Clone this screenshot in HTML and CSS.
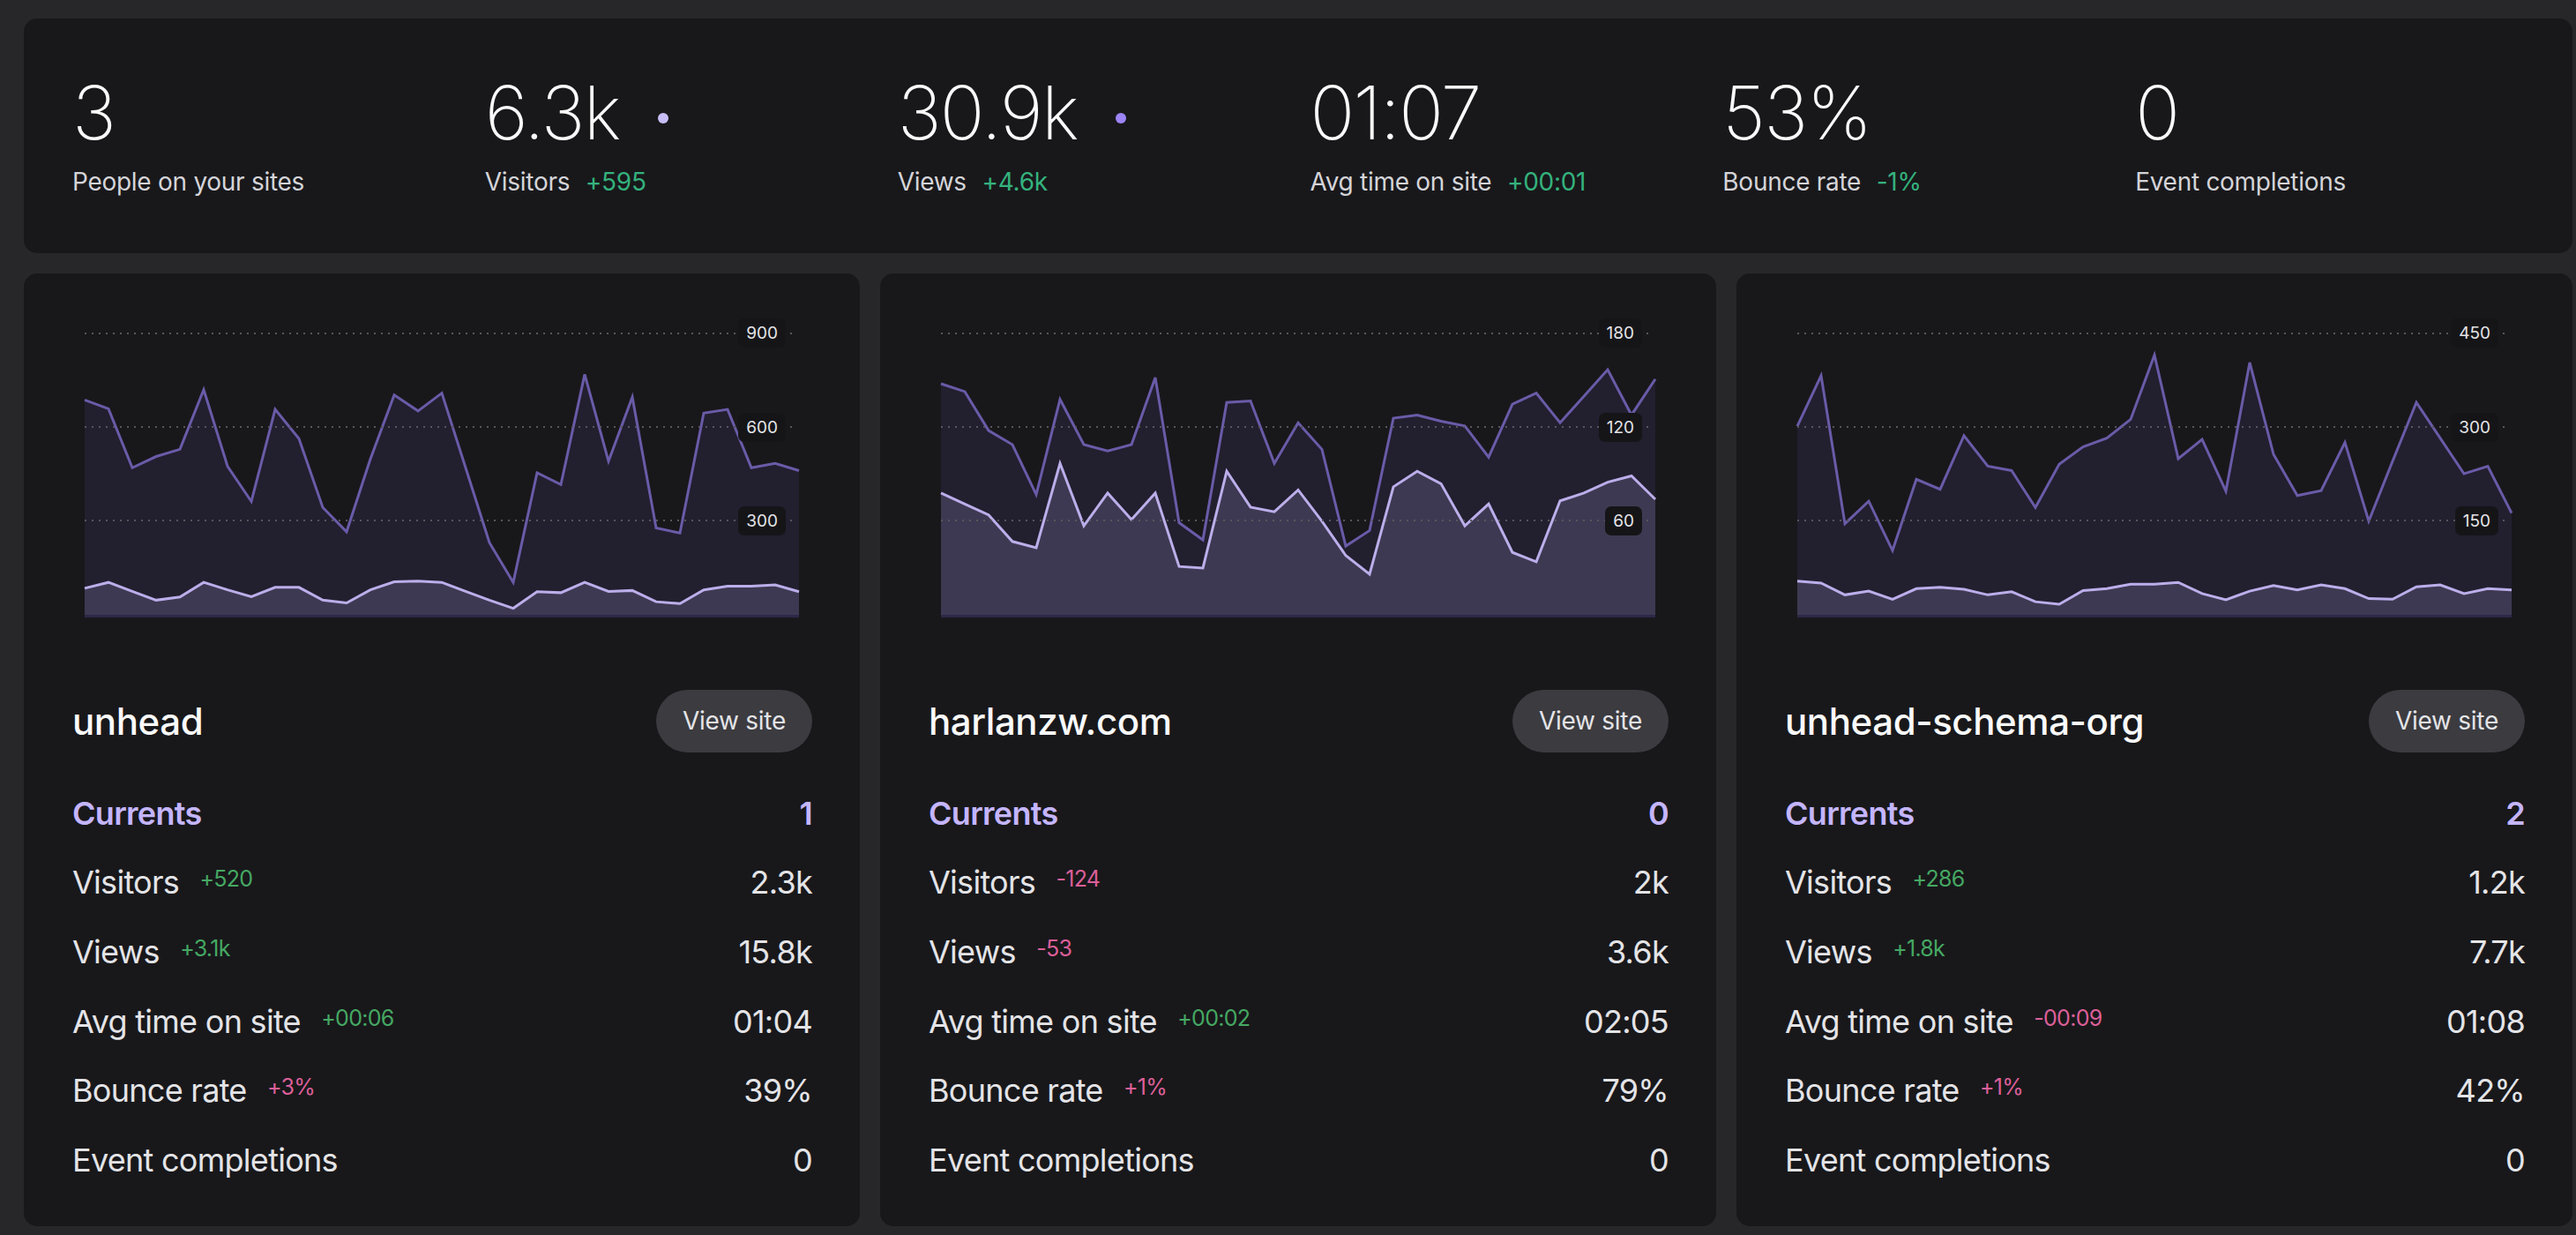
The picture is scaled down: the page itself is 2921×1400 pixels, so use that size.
FILE: index.html
```html
<!DOCTYPE html>
<html lang="en">
<head>
<meta charset="utf-8">
<title>Sites overview</title>
<link rel="stylesheet" href="styles.css">
</head>
<body>
<main class="page">
  <section class="summary">
    <div class="sum-item">
      <div class="big">3</div>
      <div class="sum-label">People on your sites</div>
    </div>
    <div class="sum-item">
      <div class="big">6.3k<span class="dot dot-visitors"></span></div>
      <div class="sum-label">Visitors <span class="up">+595</span></div>
    </div>
    <div class="sum-item">
      <div class="big">30.9k<span class="dot dot-views"></span></div>
      <div class="sum-label">Views <span class="up">+4.6k</span></div>
    </div>
    <div class="sum-item">
      <div class="big">01:07</div>
      <div class="sum-label">Avg time on site <span class="up">+00:01</span></div>
    </div>
    <div class="sum-item">
      <div class="big">53%</div>
      <div class="sum-label">Bounce rate <span class="up">-1%</span></div>
    </div>
    <div class="sum-item">
      <div class="big">0</div>
      <div class="sum-label">Event completions</div>
    </div>
  </section>

  <section class="cards">
    <!-- Card 1 -->
    <article class="card">
      <div class="chart">
        <svg class="plot" viewBox="0 0 30 1000" preserveAspectRatio="none">
          <polygon class="area-views" points="0,312 1,340 2,529 3,493 4,470 5,279 6,524 7,637 8,342 9,436 10,656 11,734 12,501 13,296 14,347 15,290 16,529 17,769 18,896 19,545 20,583 21,230 22,508 23,303 24,722 25,738 26,354 27,342 28,529 29,515 30,538 30,1000 0,1000"/>
          <polyline class="line-views" points="0,312 1,340 2,529 3,493 4,470 5,279 6,524 7,637 8,342 9,436 10,656 11,734 12,501 13,296 14,347 15,290 16,529 17,769 18,896 19,545 20,583 21,230 22,508 23,303 24,722 25,738 26,354 27,342 28,529 29,515 30,538"/>
          <polygon class="area-visitors" points="0,915 1,896 2,925 3,953 4,943 5,896 6,920 7,942 8,912 9,912 10,953 11,962 12,920 13,894 14,892 15,896 16,925 17,953 18,979 19,926 20,929 21,896 22,925 23,922 24,958 25,964 26,920 27,908 28,908 29,904 30,926 30,1000 0,1000"/>
          <polyline class="line-visitors" points="0,915 1,896 2,925 3,953 4,943 5,896 6,920 7,942 8,912 9,912 10,953 11,962 12,920 13,894 14,892 15,896 16,925 17,953 18,979 19,926 20,929 21,896 22,925 23,922 24,958 25,964 26,920 27,908 28,908 29,904 30,926"/>
        </svg>
        <div class="grid g-top"><span class="tick">900</span></div>
        <div class="grid g-mid"><span class="tick">600</span></div>
        <div class="grid g-low"><span class="tick">300</span></div>
      </div>
      <header class="card-head">
        <h2 class="site">unhead</h2>
        <a class="btn" href="#">View site</a>
      </header>
      <ul class="stats">
        <li class="row current"><span class="name">Currents</span><span class="val">1</span></li>
        <li class="row"><span class="name">Visitors <span class="delta pos">+520</span></span><span class="val">2.3k</span></li>
        <li class="row"><span class="name">Views <span class="delta pos">+3.1k</span></span><span class="val">15.8k</span></li>
        <li class="row"><span class="name">Avg time on site <span class="delta pos">+00:06</span></span><span class="val">01:04</span></li>
        <li class="row"><span class="name">Bounce rate <span class="delta neg">+3%</span></span><span class="val">39%</span></li>
        <li class="row"><span class="name">Event completions</span><span class="val">0</span></li>
      </ul>
    </article>

    <!-- Card 2 -->
    <article class="card">
      <div class="chart">
        <svg class="plot" viewBox="0 0 30 200" preserveAspectRatio="none">
          <polygon class="area-views" points="0,52 1,57 2,82 3,91 4,123 5,62 6,91 7,95 8,91 9,48 10,141 11,152 12,64 13,63 14,103 15,77 16,94 17,156 18,146 19,74 20,72 21,76 22,79 23,99 24,65 25,58 26,77 27,60 28,43 29,72 30,49 30,200 0,200"/>
          <polyline class="line-views" points="0,52 1,57 2,82 3,91 4,123 5,62 6,91 7,95 8,91 9,48 10,141 11,152 12,64 13,63 14,103 15,77 16,94 17,156 18,146 19,74 20,72 21,76 22,79 23,99 24,65 25,58 26,77 27,60 28,43 29,72 30,49"/>
          <polygon class="area-visitors" points="0,122 1,129 2,136 3,153 4,157 5,103 6,143 7,122 8,139 9,122 10,169 11,170 12,108 13,131 14,134 15,120 16,140 17,162 18,174 19,118 20,108 21,116 22,143 23,129 24,160 25,166 26,127 27,122 28,115 29,111 30,126 30,200 0,200"/>
          <polyline class="line-visitors" points="0,122 1,129 2,136 3,153 4,157 5,103 6,143 7,122 8,139 9,122 10,169 11,170 12,108 13,131 14,134 15,120 16,140 17,162 18,174 19,118 20,108 21,116 22,143 23,129 24,160 25,166 26,127 27,122 28,115 29,111 30,126"/>
        </svg>
        <div class="grid g-top"><span class="tick">180</span></div>
        <div class="grid g-mid"><span class="tick">120</span></div>
        <div class="grid g-low"><span class="tick">60</span></div>
      </div>
      <header class="card-head">
        <h2 class="site">harlanzw.com</h2>
        <a class="btn" href="#">View site</a>
      </header>
      <ul class="stats">
        <li class="row current"><span class="name">Currents</span><span class="val">0</span></li>
        <li class="row"><span class="name">Visitors <span class="delta neg">-124</span></span><span class="val">2k</span></li>
        <li class="row"><span class="name">Views <span class="delta neg">-53</span></span><span class="val">3.6k</span></li>
        <li class="row"><span class="name">Avg time on site <span class="delta pos">+00:02</span></span><span class="val">02:05</span></li>
        <li class="row"><span class="name">Bounce rate <span class="delta neg">+1%</span></span><span class="val">79%</span></li>
        <li class="row"><span class="name">Event completions</span><span class="val">0</span></li>
      </ul>
    </article>

    <!-- Card 3 -->
    <article class="card">
      <div class="chart">
        <svg class="plot" viewBox="0 0 30 500" preserveAspectRatio="none">
          <polygon class="area-views" points="0,198 1,117 2,354 3,318 4,397 5,283 6,299 7,213 8,262 9,269 10,328 11,259 12,231 13,217 14,187 15,84 16,250 17,219 18,302 19,96 20,243 21,309 22,301 23,224 24,350 25,254 26,160 27,217 28,274 29,262 30,337 30,500 0,500"/>
          <polyline class="line-views" points="0,198 1,117 2,354 3,318 4,397 5,283 6,299 7,213 8,262 9,269 10,328 11,259 12,231 13,217 14,187 15,84 16,250 17,219 18,302 19,96 20,243 21,309 22,301 23,224 24,350 25,254 26,160 27,217 28,274 29,262 30,337"/>
          <polygon class="area-visitors" points="0,446 1,449 2,468 3,462 4,475 5,458 6,456 7,459 8,468 9,463 10,479 11,483 12,461 13,458 14,451 15,451 16,448 17,466 18,476 19,462 20,453 21,460 22,452 23,458 24,474 25,475 26,455 27,452 28,466 29,458 30,460 30,500 0,500"/>
          <polyline class="line-visitors" points="0,446 1,449 2,468 3,462 4,475 5,458 6,456 7,459 8,468 9,463 10,479 11,483 12,461 13,458 14,451 15,451 16,448 17,466 18,476 19,462 20,453 21,460 22,452 23,458 24,474 25,475 26,455 27,452 28,466 29,458 30,460"/>
        </svg>
        <div class="grid g-top"><span class="tick">450</span></div>
        <div class="grid g-mid"><span class="tick">300</span></div>
        <div class="grid g-low"><span class="tick">150</span></div>
      </div>
      <header class="card-head">
        <h2 class="site">unhead-schema-org</h2>
        <a class="btn" href="#">View site</a>
      </header>
      <ul class="stats">
        <li class="row current"><span class="name">Currents</span><span class="val">2</span></li>
        <li class="row"><span class="name">Visitors <span class="delta pos">+286</span></span><span class="val">1.2k</span></li>
        <li class="row"><span class="name">Views <span class="delta pos">+1.8k</span></span><span class="val">7.7k</span></li>
        <li class="row"><span class="name">Avg time on site <span class="delta neg">-00:09</span></span><span class="val">01:08</span></li>
        <li class="row"><span class="name">Bounce rate <span class="delta neg">+1%</span></span><span class="val">42%</span></li>
        <li class="row"><span class="name">Event completions</span><span class="val">0</span></li>
      </ul>
    </article>
  </section>
</main>
</body>
</html>
```

FILE: styles.css
```css
* { box-sizing: border-box; }

html, body {
  margin: 0;
  padding: 0;
  background: #27272a;
}

body {
  font-family: "Inter", "Noto Sans", sans-serif;
  color: #e4e4e7;
  -webkit-font-smoothing: antialiased;
}

.page {
  padding: 21px 4px 10px 27px;
  display: flex;
  flex-direction: column;
  gap: 23px;
}

/* ---------- summary panel ---------- */
.summary {
  background: #18181b;
  border-radius: 15px;
  padding: 65px 28px 63px 55px;
  display: grid;
  grid-template-columns: repeat(6, 1fr);
}

.big {
  font-size: 84px;
  line-height: 1;
  font-weight: 200;
  letter-spacing: -0.02em;
  color: #fafafa;
  display: flex;
  align-items: center;
  height: 84px;
}

.dot {
  width: 12px;
  height: 12px;
  border-radius: 50%;
  margin-left: 43px;
  margin-top: 12px;
  flex: none;
}
.dot-visitors { background: #c9bdf7; }
.dot-views { background: #9d85f8; }

.sum-label {
  margin-top: 20px;
  font-size: 28px;
  line-height: 1.2;
  color: #d4d4d8;
  letter-spacing: -0.01em;
}

.up {
  color: #34b27d;
  margin-left: 10px;
}

/* ---------- cards ---------- */
.cards {
  display: grid;
  grid-template-columns: repeat(3, 1fr);
  gap: 23px;
}

.card {
  background: #18181b;
  border-radius: 15px;
  padding: 33px 54px 36px 55px;
}

.chart {
  position: relative;
  height: 357px;
  margin: 0 15px 0 14px;
  border-bottom: 3px solid #2e2748;
}

.plot {
  position: absolute;
  left: 0;
  top: 0;
  width: 100%;
  height: 354px;
  display: block;
  overflow: visible;
}

.area-views { fill: #221f2f; stroke: none; }
.area-visitors { fill: #3e3952; stroke: none; }
.line-views {
  fill: none;
  stroke: #6a5ba8;
  stroke-width: 3;
  stroke-linejoin: miter;
  vector-effect: non-scaling-stroke;
}
.line-visitors {
  fill: none;
  stroke: #bcaeea;
  stroke-width: 3;
  stroke-linejoin: miter;
  vector-effect: non-scaling-stroke;
}

.grid {
  position: absolute;
  left: 0;
  right: 3px;
  height: 2px;
  margin-top: -1px;
  background-image: linear-gradient(to right, #56565c 2px, transparent 2px);
  background-size: 8px 2px;
  background-repeat: repeat-x;
  display: flex;
  justify-content: flex-end;
  align-items: center;
}
.g-top { top: 35.4px; }
.g-mid { top: 141.6px; }
.g-low { top: 247.8px; }

.tick {
  margin-right: 12px;
  height: 33px;
  padding: 0 9px;
  border-radius: 7px;
  background: #151518;
  font-size: 19px;
  line-height: 33px;
  color: #e4e4e7;
  flex: none;
}

.card-head {
  margin-top: 82px;
  display: flex;
  justify-content: space-between;
  align-items: center;
}

.site {
  margin: 0;
  font-size: 42px;
  font-weight: 500;
  letter-spacing: -0.01em;
  color: #fafafa;
}

.btn {
  display: inline-flex;
  align-items: center;
  height: 71px;
  padding: 0 30px;
  border-radius: 36px;
  background: #3b3b40;
  color: #e4e4e7;
  font-size: 28px;
  text-decoration: none;
  letter-spacing: -0.01em;
}

.stats {
  list-style: none;
  margin: 30px 0 0;
  padding: 0;
}

.row {
  height: 78.6px;
  display: flex;
  align-items: center;
  justify-content: space-between;
  font-size: 36px;
  letter-spacing: -0.02em;
  color: #e4e4e7;
}

.row.current {
  color: #c4b5fd;
  font-weight: 600;
}

.delta {
  font-size: 25px;
  vertical-align: 8px;
  margin-left: 14px;
}
.pos { color: #45a862; }
.neg { color: #dc5f98; }

.val { text-align: right; }
```
